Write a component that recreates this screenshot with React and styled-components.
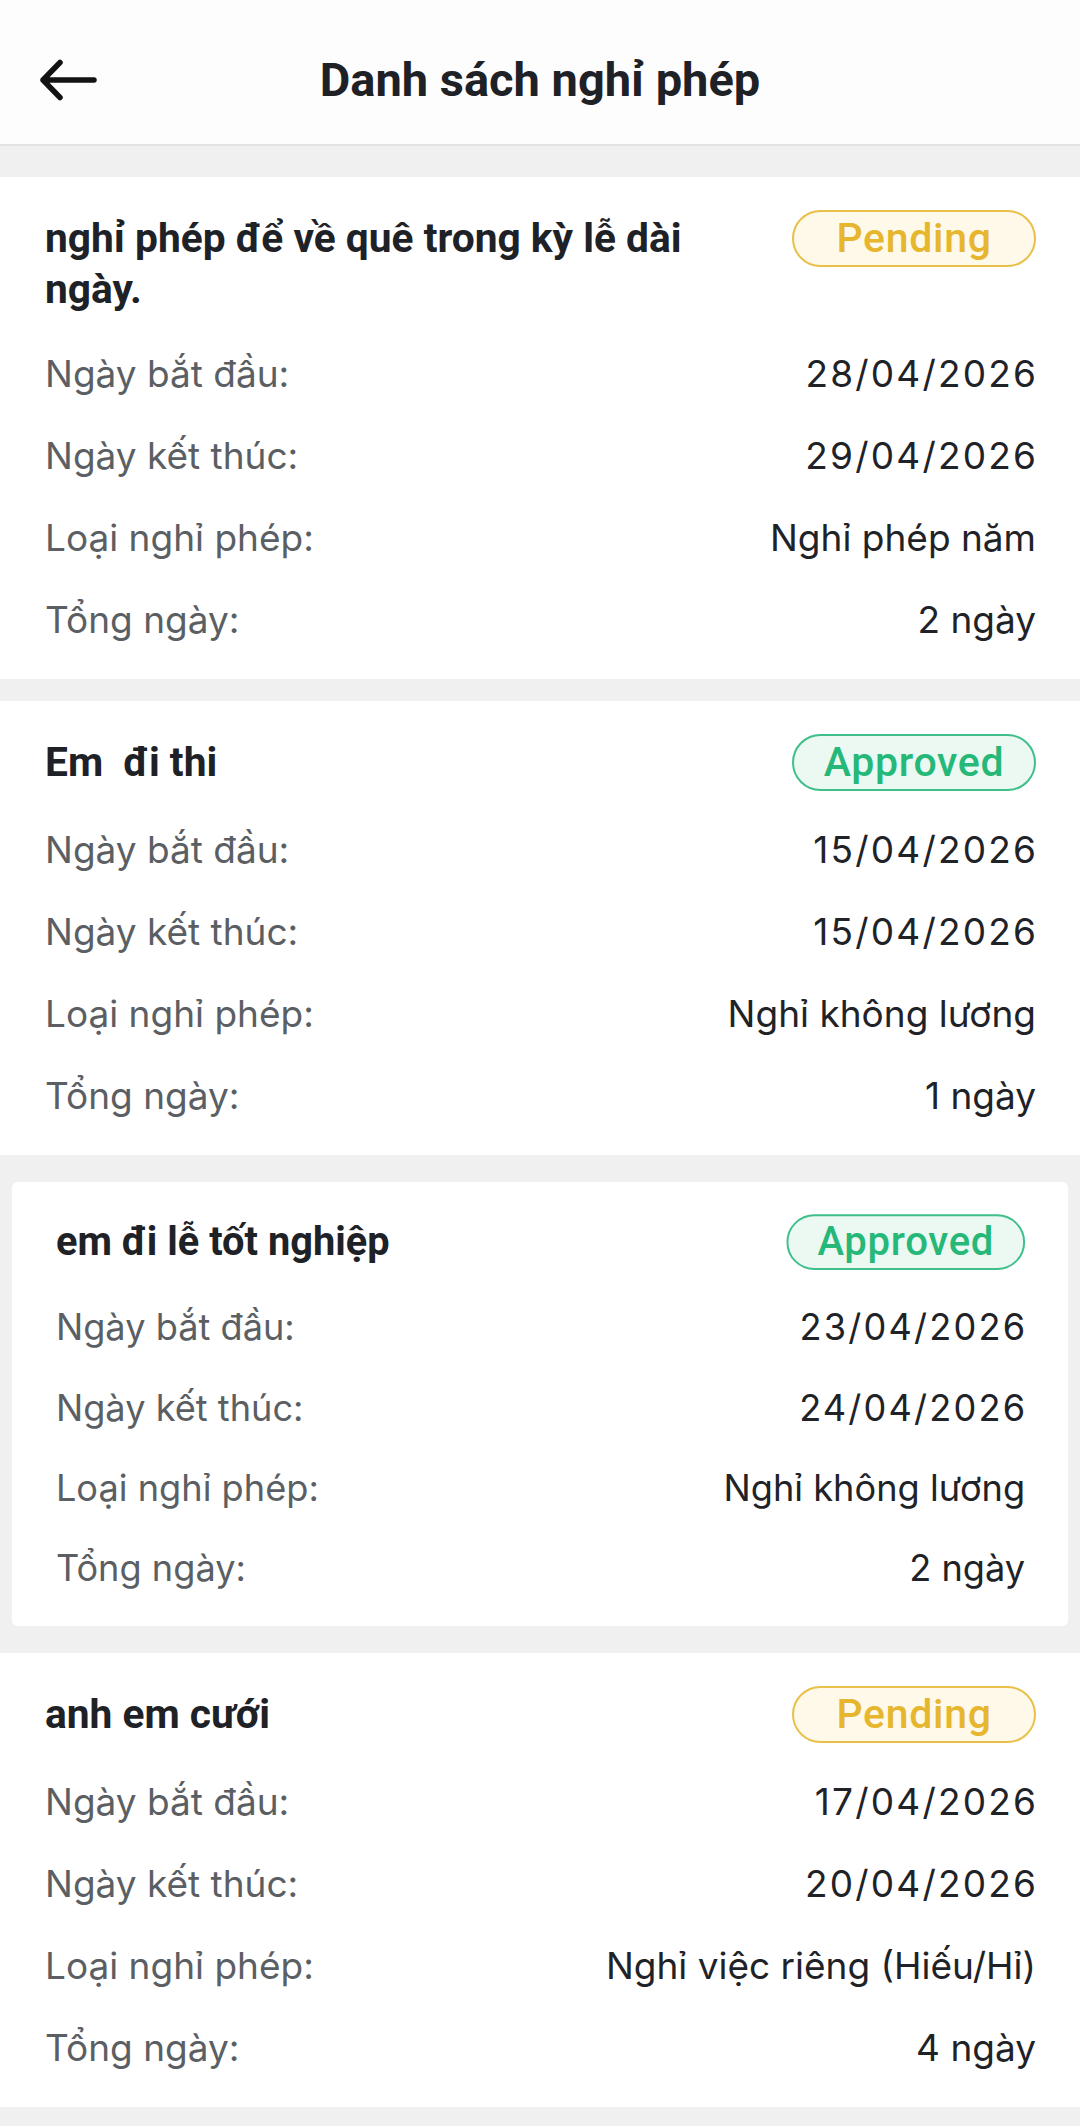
import React from 'react';
import styled, { createGlobalStyle, css } from 'styled-components';

const GlobalStyle = createGlobalStyle`
  html, body {
    margin: 0;
    padding: 0;
    background: #f0f0f0;
  }
  body {
    font-family: Roboto, "Noto Sans", sans-serif;
    -webkit-font-smoothing: antialiased;
  }
  * { box-sizing: border-box; }
`;

const Page = styled.div`
  min-height: 2126px;
  background: #f0f0f0;
`;

const Header = styled.header`
  height: 146px;
  padding-top: 16px;
  background: #fdfdfd;
  border-bottom: 2px solid #e3e3e3;
  display: grid;
  grid-template-columns: 1fr auto 1fr;
  align-items: center;
`;

const BackButton = styled.button`
  justify-self: start;
  margin-left: 39px;
  background: none;
  border: 0;
  padding: 0;
  display: flex;
  cursor: pointer;
`;

const Title = styled.h1`
  margin: 0;
  font: 700 47px/1.2 Roboto, "Noto Sans", sans-serif;
  color: #1e2227;
  white-space: nowrap;
`;

const List = styled.main`
  display: flex;
  flex-direction: column;
  gap: 22px;
  padding: 31px 0 19px;
`;

const Card = styled.section`
  background: #ffffff;
  padding: 33px 44px 33px 45px;
  display: flex;
  flex-direction: column;
  gap: 30px;
  ${(p) =>
    p.$pressed &&
    css`
      transform: scale(0.978);
      border-radius: 6px;
    `}
`;

const CardHead = styled.div`
  display: flex;
  justify-content: space-between;
  align-items: flex-start;
  gap: 40px;
  margin-bottom: 3px;
`;

const CardTitle = styled.h2`
  margin: 0;
  padding-top: 3px;
  flex: 1;
  font: 700 40.7px/51px Roboto, "Noto Sans", sans-serif;
  color: #1e2227;
  white-space: pre-wrap;
`;

const badgeColors = {
  Pending: css`
    color: #e6b62e;
    border-color: #e8c04a;
    background: #fff9ea;
  `,
  Approved: css`
    color: #26b878;
    border-color: #3fbf89;
    background: #ecf8f2;
  `,
};

const Badge = styled.span`
  flex: none;
  width: 244px;
  height: 57px;
  border-radius: 29px;
  border: 2px solid;
  display: flex;
  align-items: center;
  justify-content: center;
  font: 500 41px/1 Roboto, "Noto Sans", sans-serif;
  letter-spacing: 0.7px;
  ${(p) => badgeColors[p.$status]}
`;

const Row = styled.div`
  display: flex;
  justify-content: space-between;
  align-items: center;
  height: 52px;
  font: 400 37px/52px Inter, Roboto, sans-serif;
`;

const Label = styled.span`
  color: #5b5f64;
`;

const Value = styled.span`
  color: #1f2328;
  text-align: right;
  ${(p) =>
    p.$date &&
    css`
      letter-spacing: 2.2px;
      margin-right: -2.2px;
    `}
`;

const BackArrow = () => (
  <svg width="58" height="44" viewBox="0 0 58 44" fill="none">
    <path
      d="M55 22 H4 M21 4.5 L4 22 L21 39.5"
      stroke="#111315"
      strokeWidth="5.5"
      strokeLinecap="round"
      strokeLinejoin="round"
    />
  </svg>
);

const leaves = [
  {
    title: 'nghỉ phép để về quê trong kỳ lễ dài ngày.',
    status: 'Pending',
    start: '28/04/2026',
    end: '29/04/2026',
    type: 'Nghỉ phép năm',
    total: '2 ngày',
  },
  {
    title: 'Em  đi thi',
    status: 'Approved',
    start: '15/04/2026',
    end: '15/04/2026',
    type: 'Nghỉ không lương',
    total: '1 ngày',
  },
  {
    title: 'em đi lễ tốt nghiệp',
    status: 'Approved',
    start: '23/04/2026',
    end: '24/04/2026',
    type: 'Nghỉ không lương',
    total: '2 ngày',
    pressed: true,
  },
  {
    title: 'anh em cưới',
    status: 'Pending',
    start: '17/04/2026',
    end: '20/04/2026',
    type: 'Nghỉ việc riêng (Hiếu/Hỉ)',
    total: '4 ngày',
  },
];

export default function App() {
  return (
    <Page>
      <GlobalStyle />
      <Header>
        <BackButton aria-label="Quay lại">
          <BackArrow />
        </BackButton>
        <Title>Danh sách nghỉ phép</Title>
        <span />
      </Header>
      <List>
        {leaves.map((l, i) => (
          <Card key={i} $pressed={l.pressed}>
            <CardHead>
              <CardTitle>{l.title}</CardTitle>
              <Badge $status={l.status}>{l.status}</Badge>
            </CardHead>
            <Row>
              <Label>Ngày bắt đầu:</Label>
              <Value $date>{l.start}</Value>
            </Row>
            <Row>
              <Label>Ngày kết thúc:</Label>
              <Value $date>{l.end}</Value>
            </Row>
            <Row>
              <Label>Loại nghỉ phép:</Label>
              <Value>{l.type}</Value>
            </Row>
            <Row>
              <Label>Tổng ngày:</Label>
              <Value>{l.total}</Value>
            </Row>
          </Card>
        ))}
      </List>
    </Page>
  );
}
